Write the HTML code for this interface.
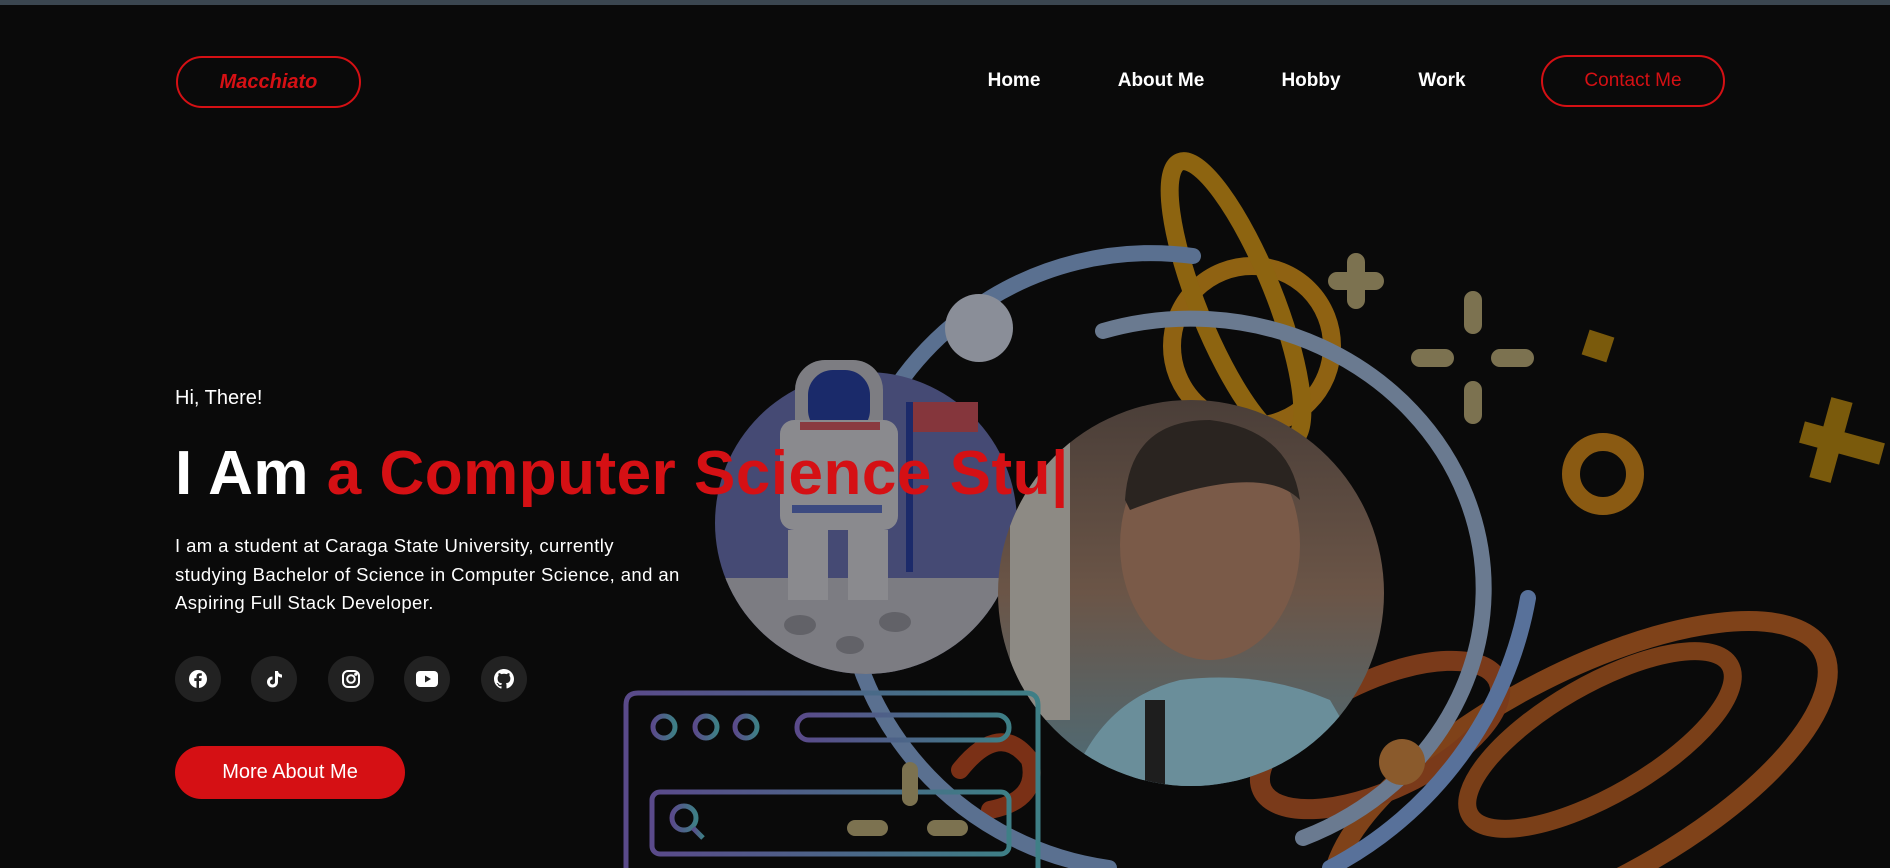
<!DOCTYPE html>
<html><head><meta charset="utf-8"><style>
*{margin:0;padding:0;box-sizing:border-box}
html,body{width:1890px;height:868px;overflow:hidden}
body{background:#0a0a0a;position:relative;font-family:"Liberation Sans",sans-serif;color:#fff}
.top{position:absolute;left:0;top:0;width:1890px;height:5px;background:#3b4650}
.logo{position:absolute;left:176px;top:56px;width:185px;height:52px;border:2px solid #d51014;border-radius:26px;color:#d51014;font-weight:bold;font-style:italic;font-size:20px;text-align:center;line-height:48px}
.nav a{position:absolute;top:70px;font-size:19px;font-weight:bold;color:#fff;text-decoration:none;transform:translateX(-50%)}
.contact{position:absolute;left:1541px;top:55px;width:184px;height:52px;border:2px solid #d51014;border-radius:26px;color:#d51014;font-size:19px;text-align:center;line-height:48px}
svg{position:absolute;left:0;top:0}
.hi{position:absolute;left:175px;top:387px;font-size:20px}
h1{position:absolute;left:175px;top:438px;font-size:62px;font-weight:900;white-space:nowrap;letter-spacing:0.5px}
h1 .r{color:#d51014}
p{position:absolute;left:175px;top:532px;width:600px;font-size:18.5px;line-height:28.5px;white-space:nowrap;letter-spacing:0.4px}
.soc{position:absolute;top:656px;width:46px;height:46px;border-radius:50%;background:#222;display:flex;align-items:center;justify-content:center}
.btn{position:absolute;left:175px;top:746px;width:230px;height:53px;border-radius:27px;background:#d51014;font-size:20px;text-align:center;line-height:53px}
</style></head><body>
<div class="top"></div>
<svg width="1890" height="868" viewBox="0 0 1890 868">
<defs>
<linearGradient id="br" x1="0" x2="1"><stop offset="0" stop-color="#5a4a8a"/><stop offset="1" stop-color="#3e7f86"/></linearGradient>
<linearGradient id="ph" x1="0" y1="0" x2="0" y2="1"><stop offset="0" stop-color="#4a3e38"/><stop offset="0.5" stop-color="#6b5547"/><stop offset="1" stop-color="#4c6c78"/></linearGradient>
<clipPath id="pc"><circle cx="1191" cy="593" r="193"/></clipPath>
<clipPath id="ac"><circle cx="866" cy="523" r="151"/></clipPath>
</defs>
<g fill="none" stroke-linecap="round">
<circle cx="1252" cy="346" r="80" stroke="#8f6212" stroke-width="18"/>
<ellipse cx="1236" cy="301" rx="38" ry="150" stroke="#8d6410" stroke-width="18" transform="rotate(-22 1236 301)"/>
<path d="M1356 262v38M1337 281h38" stroke="#7c7250" stroke-width="18"/>
<path d="M1473 300v25M1473 390v25M1420 358h25M1500 358h25" stroke="#7c7250" stroke-width="18"/>
<path d="M1842 400l-22 80M1802 432l80 22" stroke="#7a5a0c" stroke-width="22" stroke-linecap="butt"/>
<circle cx="1603" cy="474" r="32" stroke="#8a5a12" stroke-width="18"/>
<ellipse cx="1580" cy="780" rx="275" ry="105" stroke="#7f4219" stroke-width="20" transform="rotate(-28 1580 780)"/>
<ellipse cx="1600" cy="740" rx="150" ry="55" stroke="#7a3f18" stroke-width="18" transform="rotate(-30 1600 740)"/>
<ellipse cx="1380" cy="735" rx="130" ry="55" stroke="#7a3a1a" stroke-width="20" transform="rotate(-25 1380 735)"/>
<path d="M960 770 Q1000 720 1030 760 Q1040 800 990 810" stroke="#7a3016" stroke-width="18"/>
<path d="M1193 256 A305 305 0 1 0 1109 868" stroke="#5a7090" stroke-width="16"/>
<path d="M1103 331 A293 270 0 0 1 1303 838" stroke="#6a7a90" stroke-width="16"/>
<path d="M1528 598 A380 380 0 0 1 1330 868" stroke="#58719a" stroke-width="16"/>
</g>
<circle cx="1402" cy="762" r="23" fill="#8a5a2c"/>
<circle cx="979" cy="328" r="34" fill="#8a8e98"/>
<rect x="1585" y="333" width="26" height="26" fill="#7a5a0c" transform="rotate(18 1598 346)"/>
<circle cx="866" cy="523" r="151" fill="#454a74"/>
<g clip-path="url(#ac)"><rect x="715" y="578" width="302" height="120" fill="#7c7c82"/>
<ellipse cx="800" cy="625" rx="16" ry="10" fill="#626268"/><ellipse cx="895" cy="622" rx="16" ry="10" fill="#626268"/><ellipse cx="850" cy="645" rx="14" ry="9" fill="#626268"/></g>
<rect x="908" y="402" width="70" height="30" fill="#85363c"/><rect x="906" y="402" width="7" height="170" fill="#1c2a6a"/>
<rect x="795" y="360" width="88" height="90" rx="30" fill="#7d7d82"/>
<rect x="808" y="370" width="62" height="65" rx="25" fill="#1a2a6a"/>
<rect x="780" y="420" width="118" height="110" rx="14" fill="#8a8a8e"/>
<rect x="800" y="422" width="80" height="8" fill="#8a3a40"/>
<rect x="792" y="505" width="90" height="8" fill="#3c4a80"/>
<rect x="788" y="530" width="40" height="70" fill="#8a8a8e"/><rect x="848" y="530" width="40" height="70" fill="#8a8a8e"/>
<g clip-path="url(#pc)">
<rect x="998" y="400" width="386" height="386" fill="url(#ph)"/>
<rect x="1010" y="420" width="60" height="300" fill="#8d8a84"/>
<ellipse cx="1210" cy="545" rx="90" ry="115" fill="#7a5a48"/>
<path d="M1125 500 Q1130 420 1210 420 Q1290 430 1300 500 Q1260 460 1130 510Z" fill="#2a2420"/>
<path d="M1070 786 Q1100 700 1180 680 Q1260 670 1330 700 L1380 786Z" fill="#6a8e9a"/>
<rect x="1145" y="700" width="20" height="90" fill="#1e1e1e"/>
</g>
<g fill="none" stroke="url(#br)" stroke-width="5">
<path d="M626 868V705Q626 693 638 693H1026Q1038 693 1038 705V868"/>
<line x1="626" y1="758" x2="1038" y2="758"/>
<circle cx="664" cy="727" r="11"/><circle cx="706" cy="727" r="11"/><circle cx="746" cy="727" r="11"/>
<rect x="797" y="715" width="212" height="25" rx="12"/>
<rect x="652" y="792" width="357" height="62" rx="8"/>
<line x1="720" y1="792" x2="720" y2="854"/>
<circle cx="684" cy="818" r="12"/><line x1="693" y1="828" x2="703" y2="838"/>
</g>
<path d="M910 770v28M855 828h25M935 828h25" stroke="#7c7250" stroke-width="16" stroke-linecap="round"/>
</svg>
<div class="logo">Macchiato</div>
<div class="nav"><a style="left:1014px">Home</a><a style="left:1161px">About Me</a><a style="left:1311px">Hobby</a><a style="left:1442px">Work</a></div>
<div class="contact">Contact Me</div>
<div class="hi">Hi, There!</div>
<h1>I Am <span class="r">a Computer Science Stu|</span></h1>
<p>I am a student at Caraga State University, currently<br>studying Bachelor of Science in Computer Science, and an<br>Aspiring Full Stack Developer.</p>
<div class="soc" style="left:175px"><svg style="position:static" width="20" height="20" viewBox="0 0 20 20"><circle cx="10" cy="10" r="9" fill="#fff"/><path d="M11 19v-7h2.3l.4-2.7H11V8c0-.8.3-1.3 1.4-1.3h1.4V4.3c-.3 0-1.1-.1-2-.1-2 0-3.3 1.2-3.3 3.4v1.7H6.3V12h2.2v7z" fill="#222"/></svg></div>
<div class="soc" style="left:251px"><svg style="position:static" width="20" height="20" viewBox="0 0 20 20"><path d="M11 2h3q.3 3 4 3.6v3q-2.3 0-4-1.2V13a5.5 5.5 0 1 1-5.5-5.5v3A2.5 2.5 0 1 0 11 13z" fill="#fff"/></svg></div>
<div class="soc" style="left:328px"><svg style="position:static" width="20" height="20" viewBox="0 0 20 20" fill="none" stroke="#fff" stroke-width="2"><rect x="2" y="2" width="16" height="16" rx="5"/><circle cx="10" cy="10" r="3.8"/><circle cx="14.8" cy="5.2" r=".6" fill="#fff"/></svg></div>
<div class="soc" style="left:404px"><svg style="position:static" width="22" height="16" viewBox="0 0 22 16"><rect width="22" height="16" rx="4" fill="#fff"/><path d="M9 4.5v7l6-3.5z" fill="#222"/></svg></div>
<div class="soc" style="left:481px"><svg style="position:static" width="20" height="20" viewBox="0 0 16 16"><path fill="#fff" d="M8 0C3.6 0 0 3.6 0 8c0 3.5 2.3 6.5 5.5 7.6.4.1.5-.2.5-.4v-1.4c-2.2.5-2.7-1-2.7-1-.4-.9-.9-1.2-.9-1.2-.7-.5.1-.5.1-.5.8.1 1.2.8 1.2.8.7 1.3 1.9.9 2.3.7.1-.5.3-.9.5-1.1-1.8-.2-3.6-.9-3.6-4 0-.9.3-1.6.8-2.1-.1-.2-.4-1 .1-2.1 0 0 .7-.2 2.2.8.6-.2 1.3-.3 2-.3s1.4.1 2 .3c1.5-1 2.2-.8 2.2-.8.4 1.1.2 1.9.1 2.1.5.6.8 1.3.8 2.1 0 3.1-1.9 3.7-3.6 3.9.3.3.5.8.5 1.5v2.2c0 .2.1.5.6.4C13.7 14.5 16 11.5 16 8c0-4.4-3.6-8-8-8z"/></svg></div>
<div class="btn">More About Me</div>
</body></html>
